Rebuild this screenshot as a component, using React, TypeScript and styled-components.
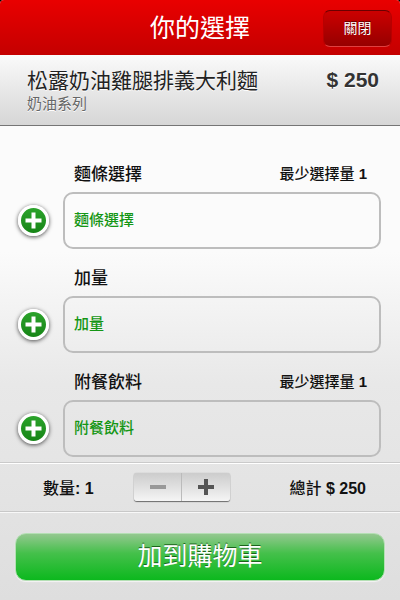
import React, { useState } from "react";
import styled, { createGlobalStyle } from "styled-components";

const GlobalStyle = createGlobalStyle`
  *, *::before, *::after { box-sizing: border-box; }
  html { background: #000; }
  body {
    margin: 0;
    font-family: "Liberation Sans", "Noto Sans CJK TC", sans-serif;
    color: #111;
  }
  button, input { font: inherit; }
  h1, h2, p { margin: 0; font-weight: 400; }
`;

const Page = styled.div`
  min-height: 100vh;
  display: flex;
  flex-direction: column;
  background: linear-gradient(#fbfbfb 0%, #fbfbfb 42%, #e8e8e8 64%, #e4e4e4 80%, #dedede 100%);
  border-radius: 4px 4px 0 0;
  overflow: hidden;
`;

const Header = styled.header`
  display: grid;
  grid-template-columns: 1fr auto 1fr;
  align-items: center;
  height: 55px;
  padding: 0 8px;
  background: linear-gradient(#e90000, #c40000);
`;

const Title = styled.h1`
  grid-column: 2;
  font-size: 25px;
  line-height: 36px;
  color: #fff;
`;

const CloseButton = styled.button`
  justify-self: end;
  width: 69px;
  height: 37px;
  margin-top: 1px;
  padding: 0;
  border: 1px solid #b80000;
  border-top-color: #6a0000;
  border-bottom-color: #e04040;
  border-radius: 7px;
  background: linear-gradient(#cc0000, #960000);
  color: #fff;
  font-size: 14px;
  line-height: 34px;
  text-shadow: 0 -1px 0 rgba(0, 0, 0, 0.5);
  cursor: pointer;
`;

const Item = styled.section`
  display: flex;
  justify-content: space-between;
  height: 71px;
  padding: 12px 21px 0 27px;
  background: linear-gradient(#fafafa, #d6d6d6);
  border-bottom: 1px solid #757575;
  text-shadow: 0 1px 0 #fff;
`;

const ItemName = styled.h2`
  font-size: 21px;
  line-height: 28px;
  color: #222;
`;

const Series = styled.p`
  font-size: 15px;
  line-height: 18px;
  color: #666;
`;

const Price = styled.strong`
  font-size: 21px;
  line-height: 25px;
  color: #333;
`;

const Options = styled.main`
  flex: 1;
  display: flex;
  flex-direction: column;
  gap: 16px;
  padding: 34px 19px 6px 18px;
`;

const Option = styled.section`
  display: grid;
  grid-template-columns: 45px 1fr;
  row-gap: 8px;
  align-items: center;
`;

const OptionHead = styled.div`
  grid-column: 2;
  display: flex;
  justify-content: space-between;
  align-items: center;
  height: 24px;
  padding: 0 14px 0 11px;
`;

const OptionLabel = styled.label`
  font-size: 17px;
  font-weight: 500;
`;

const Minimum = styled.span`
  font-size: 15px;
  font-weight: 500;
`;

const AddButton = styled.button`
  display: flex;
  width: 31px;
  height: 31px;
  padding: 0;
  border: 3px solid #fff;
  border-radius: 50%;
  background: linear-gradient(#2ba32b, #178517);
  box-shadow: 0 1px 4px rgba(0, 0, 0, 0.7);
  cursor: pointer;

  svg { width: 25px; height: 25px; }
`;

const OptionField = styled.input`
  width: 100%;
  height: 57px;
  margin-bottom: -1px;
  padding: 0 9px 2px;
  border: 2px solid #bdbdbd;
  border-radius: 10px;
  background: transparent;
  font-size: 15px;
  font-weight: 500;
  color: #149614;

  &::placeholder { color: #149614; opacity: 1; }
`;

const Summary = styled.section`
  display: grid;
  grid-template-columns: 2fr auto 3fr;
  align-items: center;
  height: 49px;
  padding: 0 34px 0 43px;
  border-top: 1px solid #cacaca;
  box-shadow: inset 0 1px 0 #fff;
  font-size: 16px;
  font-weight: 500;

  > :last-child { justify-self: end; }
`;

const Quantity = styled.span`
  white-space: nowrap;
`;

const Stepper = styled.div`
  display: flex;
  width: 96px;
  height: 28px;
  border-radius: 3px;
  background: linear-gradient(#cccccc, #f5f5f5);
  box-shadow: 0 0 1px #999, 0 1px 1px #666;
`;

const StepButton = styled.button`
  flex: 1;
  display: flex;
  align-items: center;
  justify-content: center;
  padding: 0;
  border: 0;
  background: transparent;
  color: #555;
  cursor: pointer;

  & + & { border-left: 1px solid #bbb; }
  &:disabled { color: #999; cursor: default; }
`;

const Footer = styled.footer`
  height: 89px;
  padding: 21px 15px 0;
  border-top: 1px solid #c8c8c8;
  box-shadow: inset 0 1px 0 #f8f8f8;
`;

const CartButton = styled.button`
  display: block;
  width: 100%;
  height: 48px;
  padding: 0 0 2px;
  border: 1px solid #b4dfb4;
  border-radius: 11px;
  background: linear-gradient(#98c893 0%, #45c04b 42%, #0ab81c 100%) border-box;
  box-shadow: 0 1px 1px #f4f4f4;
  color: #fff;
  font-size: 25px;
  line-height: 44px;
  text-shadow: 0 -1px 0 #1c641c;
  cursor: pointer;
`;

const options = [
  { id: "noodle", label: "麵條選擇", minimum: 1 },
  { id: "extra", label: "加量", minimum: 0 },
  { id: "drink", label: "附餐飲料", minimum: 1 },
];

const unitPrice = 250;

export default function App() {
  const [quantity, setQuantity] = useState(1);

  return (
    <>
      <GlobalStyle />
      <Page>
        <Header>
          <Title>你的選擇</Title>
          <CloseButton type="button">關閉</CloseButton>
        </Header>

        <Item>
          <div>
            <ItemName>松露奶油雞腿排義大利麵</ItemName>
            <Series>奶油系列</Series>
          </div>
          <Price>$ {unitPrice}</Price>
        </Item>

        <Options>
          {options.map(({ id, label, minimum }) => (
            <Option key={id}>
              <OptionHead>
                <OptionLabel htmlFor={id}>{label}</OptionLabel>
                {minimum > 0 && (
                  <Minimum>
                    最少選擇量 <b>{minimum}</b>
                  </Minimum>
                )}
              </OptionHead>
              <AddButton type="button" aria-label={label}>
                <svg viewBox="0 0 25 25" aria-hidden="true">
                  <path d="M12.5 4.5v16M4.5 12.5h16" stroke="#fff" strokeWidth="4" />
                </svg>
              </AddButton>
              <OptionField id={id} placeholder={label} readOnly />
            </Option>
          ))}
        </Options>

        <Summary>
          <Quantity>
            數量<b>: {quantity}</b>
          </Quantity>
          <Stepper>
            <StepButton
              type="button"
              aria-label="−"
              disabled={quantity === 1}
              onClick={() => setQuantity(quantity - 1)}
            >
              <svg width="18" height="18" viewBox="0 0 18 18" aria-hidden="true">
                <path d="M1 9h16" stroke="currentColor" strokeWidth="4" />
              </svg>
            </StepButton>
            <StepButton type="button" aria-label="+" onClick={() => setQuantity(quantity + 1)}>
              <svg width="18" height="18" viewBox="0 0 18 18" aria-hidden="true">
                <path d="M9 1v16M1 9h16" stroke="currentColor" strokeWidth="4" />
              </svg>
            </StepButton>
          </Stepper>
          <span>
            總計 <b>$ {unitPrice * quantity}</b>
          </span>
        </Summary>

        <Footer>
          <CartButton type="button">加到購物車</CartButton>
        </Footer>
      </Page>
    </>
  );
}
